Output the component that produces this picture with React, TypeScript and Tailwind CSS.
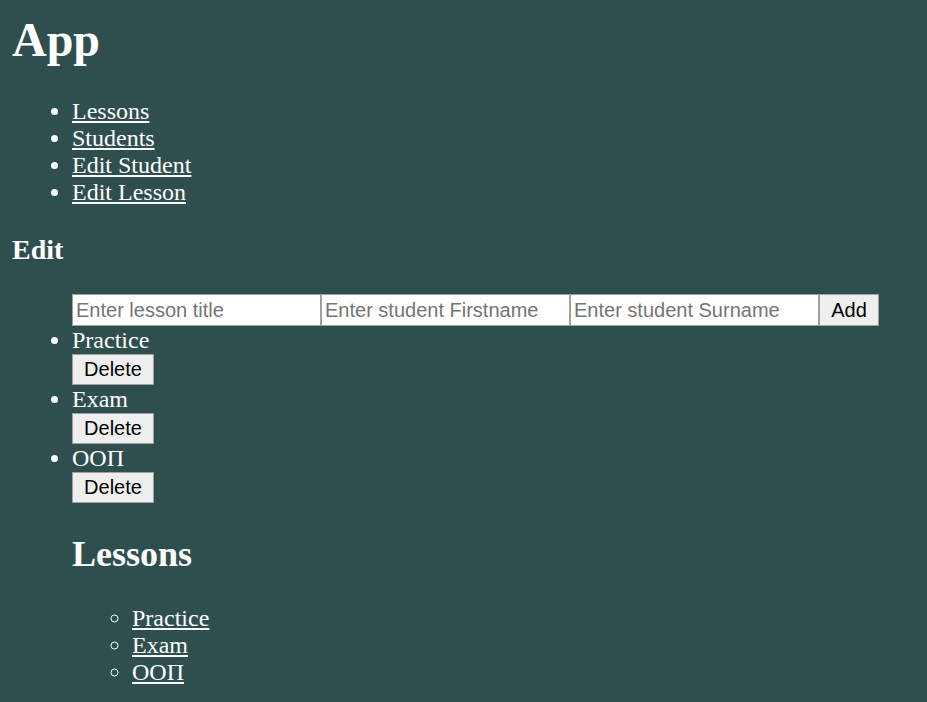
import { useState } from "react";

const LESSONS = ["Practice", "Exam", "ООП"];

export default function App() {
  const [lessons, setLessons] = useState(LESSONS);

  return (
    <div className="min-h-screen bg-[#2f4f4f] px-[12px] pt-[12px] pb-[12px] font-['Liberation_Serif',serif] text-[24px] leading-[27px] text-white">
      <h1 className="text-[48px] font-bold leading-[55px]">App</h1>

      <ul className="mt-[31px] list-disc pl-[60px]">
        {["Lessons", "Students", "Edit Student", "Edit Lesson"].map((l) => (
          <li key={l}>
            <a href="#" className="underline">
              {l}
            </a>
          </li>
        ))}
      </ul>

      <h3 className="mt-[28px] text-[28px] font-bold leading-[32px]">Edit</h3>

      <ul className="mt-[28px] list-disc pl-[60px]">
        <div className="flex font-['Liberation_Sans',sans-serif] text-[20px] leading-[23px] text-black">
          <input
            placeholder="Enter lesson title"
            className="h-[32px] w-[249px] border border-[#a0a0a0] bg-white px-[3px] placeholder:text-[#757575] outline-none"
          />
          <input
            placeholder="Enter student Firstname"
            className="h-[32px] w-[249px] border border-[#a0a0a0] bg-white px-[3px] placeholder:text-[#757575] outline-none"
          />
          <input
            placeholder="Enter student Surname"
            className="h-[32px] w-[249px] border border-[#a0a0a0] bg-white px-[3px] placeholder:text-[#757575] outline-none"
          />
          <button className="h-[32px] w-[60px] border border-[#a0a0a0] bg-[#efefef]">Add</button>
        </div>
        {lessons.map((l) => (
          <li key={l}>
            <div className="leading-[28px]">{l}</div>
            <button
              onClick={() => setLessons(lessons.filter((x) => x !== l))}
              className="block h-[31px] w-[82px] border border-[#a0a0a0] bg-[#efefef] font-['Liberation_Sans',sans-serif] text-[20px] text-black"
            >
              Delete
            </button>
          </li>
        ))}

        <h2 className="mt-[31px] text-[36px] font-bold leading-[41px]">Lessons</h2>
        <ul className="mt-[30px] list-[circle] pl-[60px]">
          {lessons.map((l) => (
            <li key={l}>
              <a href="#" className="underline">
                {l}
              </a>
            </li>
          ))}
        </ul>
      </ul>
    </div>
  );
}
